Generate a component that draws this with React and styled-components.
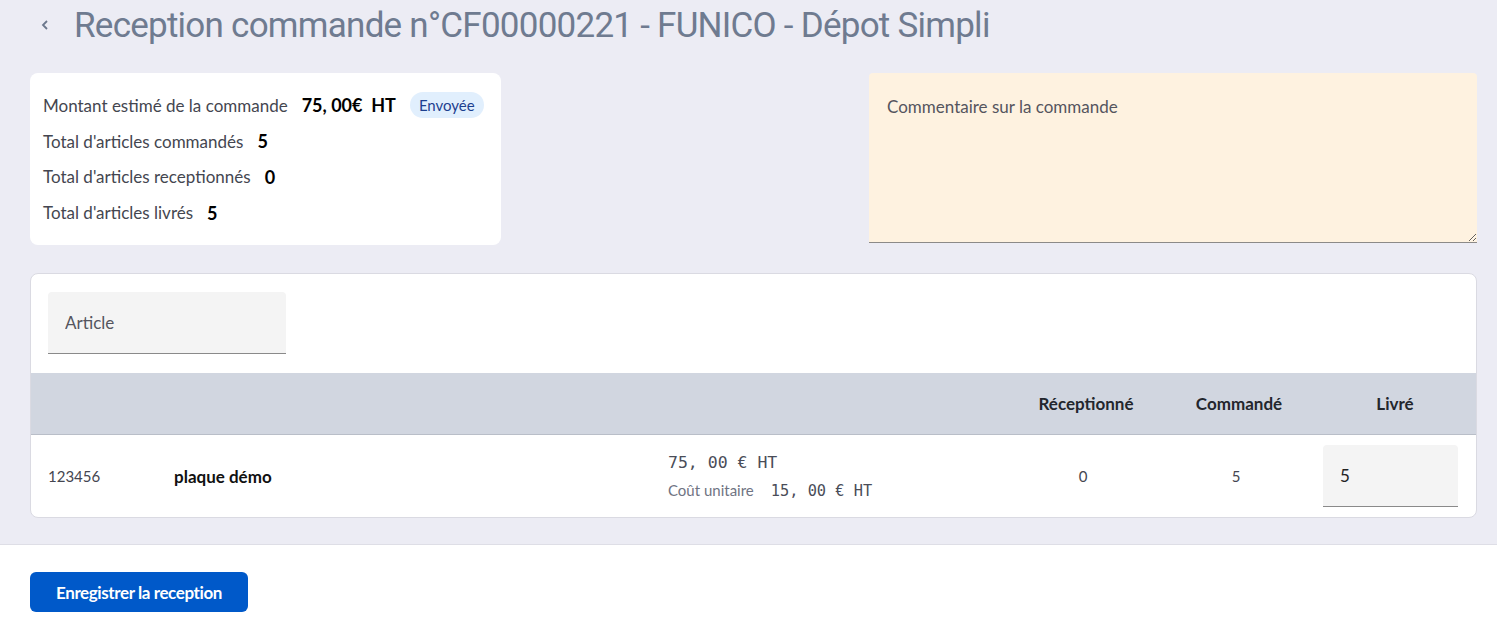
import React from "react";
import styled, { createGlobalStyle } from "styled-components";

const Global = createGlobalStyle`
  html, body { margin: 0; padding: 0; }
  body {
    background: #ffffff;
    font-family: "Lato", "Noto Sans", sans-serif;
    color: #333;
  }
  * { box-sizing: border-box; }
`;

const Main = styled.div`
  background: #ececf4;
  padding: 0 20px 26px 30px;
  border-bottom: 1px solid #dedee6;
`;

const Header = styled.header`
  display: flex;
  align-items: center;
  height: 50px;
  gap: 20px;
  padding-left: 6px;
`;

const Back = styled.button`
  border: none;
  background: transparent;
  padding: 0;
  width: 18px;
  height: 18px;
  display: flex;
  align-items: center;
  justify-content: center;
  color: #6b778c;
  cursor: pointer;
`;

const Title = styled.h1`
  margin: 0;
  font-family: "Roboto", sans-serif;
  font-weight: 400;
  font-size: 35px;
  letter-spacing: -0.75px;
  color: #6f7b90;
`;

const Top = styled.section`
  display: grid;
  grid-template-columns: 471px 1fr 608px;
  align-items: start;
  margin-top: 23px;
`;

const Summary = styled.div`
  background: #fff;
  border-radius: 8px;
  height: 172px;
  padding: 19px 13px;
  display: flex;
  flex-direction: column;
  gap: 9px;
`;

const SumRow = styled.div`
  display: flex;
  align-items: center;
  height: 27px;
  gap: 14px;
  font-size: 17px;
  color: #444650;
`;

const Value = styled.span`
  font-weight: 700;
  font-size: 18px;
  color: #000;
  white-space: pre;
`;

const Badge = styled.span`
  background: #e1effd;
  color: #1d3f8f;
  font-size: 15px;
  padding: 4px 9px;
  border-radius: 14px;
`;

const Comment = styled.textarea`
  grid-column: 3;
  height: 170px;
  background: #fef2e0;
  border: none;
  border-bottom: 1px solid #8c8a88;
  border-radius: 4px 4px 0 0;
  padding: 23px 18px;
  font-family: inherit;
  font-size: 17px;
  color: #333;
  outline: none;
  &::placeholder { color: #55555e; }
`;

const TableCard = styled.section`
  margin-top: 28px;
  background: #fff;
  border: 1px solid #dadae2;
  border-radius: 8px;
  overflow: hidden;
`;

const Filters = styled.div`
  padding: 18px 17px 19px;
`;

const FieldInput = styled.input`
  display: block;
  width: ${(p) => p.$w}px;
  height: 62px;
  background: #f4f4f4;
  border: none;
  border-bottom: 1px solid #8a8a8a;
  border-radius: 4px 4px 0 0;
  padding: 0 17px;
  font-family: inherit;
  font-size: 17px;
  color: #222;
  outline: none;
  &::placeholder { color: #55555e; }
`;

const Grid = styled.div`
  display: grid;
  grid-template-columns: 126px 494px 340px 156px 150px 1fr;
  align-items: center;
  padding-left: 17px;
`;

const HeadRow = styled(Grid)`
  height: 62px;
  background: #d1d6e0;
  border-bottom: 1px solid #b9bec8;
`;

const Th = styled.div`
  font-weight: 700;
  font-size: 17px;
  color: #23262d;
  text-align: center;
`;

const BodyRow = styled(Grid)`
  height: 82px;
`;

const Td = styled.div`
  font-size: ${(p) => (p.$bold ? 17 : 15)}px;
  font-weight: ${(p) => (p.$bold ? 700 : 400)};
  color: ${(p) => (p.$bold ? "#111" : "#444650")};
  text-align: ${(p) => (p.$center ? "center" : "left")};
  padding-right: ${(p) => (p.$center ? 6 : 0)}px;
`;

const Price = styled.div`
  display: flex;
  flex-direction: column;
  gap: 9px;
`;

const Mono = styled.span`
  font-family: "DejaVu Sans Mono", monospace;
  font-size: ${(p) => p.$size}px;
  color: #4a4d58;
  white-space: pre;
`;

const Sub = styled.div`
  display: flex;
  align-items: baseline;
  gap: 17px;
  font-size: 15px;
  color: #6f7483;
`;

const Cell = styled.div`
  padding-left: 9px;
`;

const Footer = styled.footer`
  padding: 27px 30px;
`;

const Primary = styled.button`
  background: #0059c9;
  color: #fff;
  border: none;
  border-radius: 6px;
  height: 40px;
  width: 218px;
  font-family: inherit;
  font-weight: 700;
  font-size: 17px;
  letter-spacing: -0.4px;
  cursor: pointer;
`;

export default function App() {
  return (
    <>
      <Global />
      <Main>
        <Header>
          <Back aria-label="Retour">
            <svg width="10" height="12" viewBox="0 0 10 12" fill="none">
              <path d="M7 2 L3 6 L7 10" stroke="currentColor" strokeWidth="1.8" />
            </svg>
          </Back>
          <Title>Reception commande n°CF00000221 - FUNICO - Dépot Simpli</Title>
        </Header>
        <Top>
          <Summary>
            <SumRow>
              Montant estimé de la commande <Value>75, 00€  HT</Value>
              <Badge>Envoyée</Badge>
            </SumRow>
            <SumRow>
              Total d'articles commandés <Value>5</Value>
            </SumRow>
            <SumRow>
              Total d'articles receptionnés <Value>0</Value>
            </SumRow>
            <SumRow>
              Total d'articles livrés <Value>5</Value>
            </SumRow>
          </Summary>
          <Comment placeholder="Commentaire sur la commande" />
        </Top>
        <TableCard>
          <Filters>
            <FieldInput $w={238} placeholder="Article" />
          </Filters>
          <HeadRow>
            <div />
            <div />
            <div />
            <Th>Réceptionné</Th>
            <Th>Commandé</Th>
            <Th>Livré</Th>
          </HeadRow>
          <BodyRow>
            <Td>123456</Td>
            <Td $bold>plaque démo</Td>
            <Price>
              <Mono $size={16.5}>75, 00 € HT</Mono>
              <Sub>
                Coût unitaire <Mono $size={15.3}>15, 00 € HT</Mono>
              </Sub>
            </Price>
            <Td $center>0</Td>
            <Td $center>5</Td>
            <Cell>
              <FieldInput $w={135} defaultValue="5" />
            </Cell>
          </BodyRow>
        </TableCard>
      </Main>
      <Footer>
        <Primary>Enregistrer la reception</Primary>
      </Footer>
    </>
  );
}
